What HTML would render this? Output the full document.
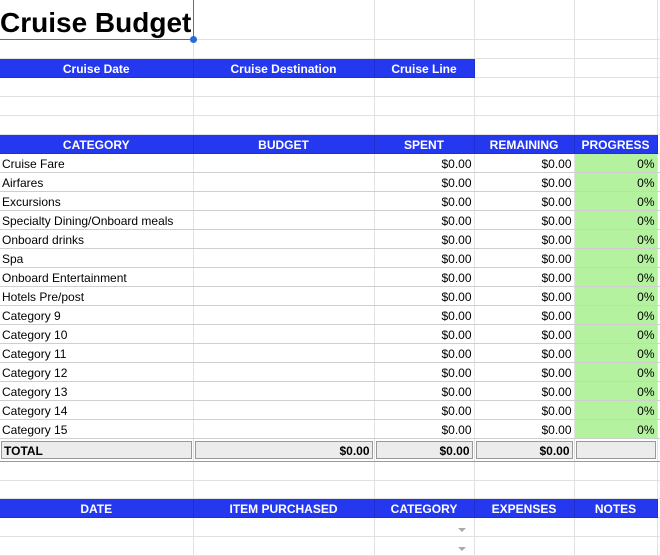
<!DOCTYPE html>
<html><head><meta charset="utf-8"><style>
body{margin:0;width:660px;height:556px;overflow:hidden;background:#fff;font-family:"Liberation Sans",Arial,sans-serif;font-size:12px;color:#000}
table{border-collapse:collapse;table-layout:fixed;position:absolute;left:0;top:0;width:660px}
td{border-right:1px solid #e1e1e1;border-bottom:1px solid #e1e1e1;padding:2px 2px 0 2px;white-space:nowrap;overflow:hidden;box-sizing:border-box;line-height:14px}
td.x{padding:0;border-right:0}
tr.h td{background:#2438f0;color:#fff;font-weight:bold;text-align:center;border-right-color:#2030d0;border-bottom-color:#2030d0}
tr.h td.e{background:#fff;border-right-color:#e1e1e1;border-bottom-color:#e1e1e1}
tr.d td{border-bottom-color:#cfcfcf}
td.r{text-align:right}
td.g{background:#b5f2a0;text-align:right}
tr.t td{background:#fff;padding:1px;border-bottom-color:#999}
tr.t td div{background:#ececec;border:1px solid #999;height:18px;line-height:18px;padding:0 2px;font-weight:bold;box-sizing:border-box}
td.title{font-size:28px;font-weight:bold;padding:0;vertical-align:bottom;line-height:32px;border-bottom:1px solid #3b74d6;border-right:1px solid #3b74d6;position:relative;overflow:visible}
.dot{position:absolute;right:-4px;bottom:-4px;width:7px;height:7px;border-radius:50%;background:#2a6ad8}
.dd{float:right;width:0;height:0;border-left:4px solid transparent;border-right:4px solid transparent;border-top:4px solid #aaa;margin-top:5px;margin-right:6px}
</style></head><body>
<table>
<colgroup><col style="width:193px"><col style="width:181px"><col style="width:100px"><col style="width:100px"><col style="width:83px"><col style="width:3px"></colgroup>
<tr style="height:39px"><td class="title">Cruise Budget<div class="dot"></div></td><td></td><td></td><td></td><td></td><td class="x"></td></tr>
<tr style="height:19px"><td></td><td></td><td></td><td></td><td></td><td class="x"></td></tr>
<tr class="h" style="height:19px"><td>Cruise Date</td><td>Cruise Destination</td><td>Cruise Line</td><td class="e"></td><td class="e"></td><td class="e x"></td></tr>
<tr style="height:19px"><td></td><td></td><td></td><td></td><td></td><td class="x"></td></tr>
<tr style="height:19px"><td></td><td></td><td></td><td></td><td></td><td class="x"></td></tr>
<tr style="height:19px"><td></td><td></td><td></td><td></td><td></td><td class="x"></td></tr>
<tr class="h" style="height:19px"><td>CATEGORY</td><td>BUDGET</td><td>SPENT</td><td>REMAINING</td><td>PROGRESS</td><td class="e x"></td></tr>
<tr class="d" style="height:19px"><td>Cruise Fare</td><td></td><td class="r">$0.00</td><td class="r">$0.00</td><td class="g">0%</td><td class="x"></td></tr>
<tr class="d" style="height:19px"><td>Airfares</td><td></td><td class="r">$0.00</td><td class="r">$0.00</td><td class="g">0%</td><td class="x"></td></tr>
<tr class="d" style="height:19px"><td>Excursions</td><td></td><td class="r">$0.00</td><td class="r">$0.00</td><td class="g">0%</td><td class="x"></td></tr>
<tr class="d" style="height:19px"><td>Specialty Dining/Onboard meals</td><td></td><td class="r">$0.00</td><td class="r">$0.00</td><td class="g">0%</td><td class="x"></td></tr>
<tr class="d" style="height:19px"><td>Onboard drinks</td><td></td><td class="r">$0.00</td><td class="r">$0.00</td><td class="g">0%</td><td class="x"></td></tr>
<tr class="d" style="height:19px"><td>Spa</td><td></td><td class="r">$0.00</td><td class="r">$0.00</td><td class="g">0%</td><td class="x"></td></tr>
<tr class="d" style="height:19px"><td>Onboard Entertainment</td><td></td><td class="r">$0.00</td><td class="r">$0.00</td><td class="g">0%</td><td class="x"></td></tr>
<tr class="d" style="height:19px"><td>Hotels Pre/post</td><td></td><td class="r">$0.00</td><td class="r">$0.00</td><td class="g">0%</td><td class="x"></td></tr>
<tr class="d" style="height:19px"><td>Category 9</td><td></td><td class="r">$0.00</td><td class="r">$0.00</td><td class="g">0%</td><td class="x"></td></tr>
<tr class="d" style="height:19px"><td>Category 10</td><td></td><td class="r">$0.00</td><td class="r">$0.00</td><td class="g">0%</td><td class="x"></td></tr>
<tr class="d" style="height:19px"><td>Category 11</td><td></td><td class="r">$0.00</td><td class="r">$0.00</td><td class="g">0%</td><td class="x"></td></tr>
<tr class="d" style="height:19px"><td>Category 12</td><td></td><td class="r">$0.00</td><td class="r">$0.00</td><td class="g">0%</td><td class="x"></td></tr>
<tr class="d" style="height:19px"><td>Category 13</td><td></td><td class="r">$0.00</td><td class="r">$0.00</td><td class="g">0%</td><td class="x"></td></tr>
<tr class="d" style="height:19px"><td>Category 14</td><td></td><td class="r">$0.00</td><td class="r">$0.00</td><td class="g">0%</td><td class="x"></td></tr>
<tr class="d" style="height:19px"><td>Category 15</td><td></td><td class="r">$0.00</td><td class="r">$0.00</td><td class="g">0%</td><td class="x"></td></tr>
<tr class="t" style="height:23px"><td><div>TOTAL</div></td><td><div style="text-align:right">$0.00</div></td><td><div style="text-align:right">$0.00</div></td><td><div style="text-align:right">$0.00</div></td><td><div></div></td><td class="x" style="background:#fff"></td></tr>
<tr style="height:19px"><td></td><td></td><td></td><td></td><td></td><td class="x"></td></tr>
<tr style="height:18px"><td></td><td></td><td></td><td></td><td></td><td class="x"></td></tr>
<tr class="h" style="height:19px"><td>DATE</td><td>ITEM PURCHASED</td><td>CATEGORY</td><td>EXPENSES</td><td>NOTES</td><td class="e x"></td></tr>
<tr style="height:19px"><td></td><td></td><td><span class="dd"></span></td><td></td><td></td><td class="x"></td></tr>
<tr style="height:19px"><td></td><td></td><td><span class="dd"></span></td><td></td><td></td><td class="x"></td></tr>
</table>
</body></html>
